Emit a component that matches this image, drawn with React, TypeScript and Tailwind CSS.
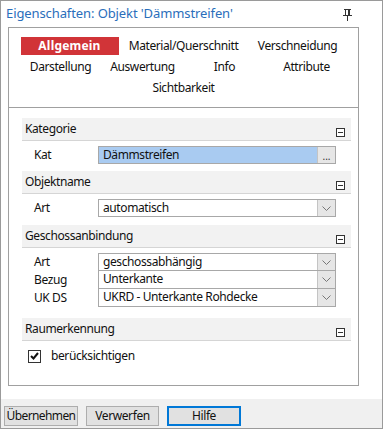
import React from "react";

// ─── Kleine Bausteine ────────────────────────────────────────────────────────

function PinIcon() {
  return (
    <svg width="9" height="12" viewBox="0 0 9 12" className="block" aria-hidden="true">
      <rect x="1" y="0" width="7" height="1" fill="#333" />
      <rect x="2" y="1" width="1" height="5" fill="#333" />
      <rect x="5" y="1" width="2" height="5" fill="#333" />
      <rect x="0" y="6" width="9" height="1" fill="#333" />
      <rect x="4" y="7" width="1" height="5" fill="#333" />
    </svg>
  );
}

function CollapseBox() {
  return (
    <div className="flex h-[9px] w-[9px] items-center justify-center border border-[#333] bg-white">
      <div className="h-px w-[5px] bg-[#333]" />
    </div>
  );
}

function Chevron() {
  return (
    <svg width="9" height="5" viewBox="0 0 9 5" aria-hidden="true">
      <path d="M0.5 0.5 4.5 4.5 8.5 0.5" fill="none" stroke="#777" strokeWidth="1" />
    </svg>
  );
}

function SectionHeader({ title }: { title: string }) {
  return (
    <div className="flex h-[23px] items-end justify-between border-b border-[#d5d5d5] bg-[#f2f2f2] pl-[3px] pr-[6px]">
      <span className="self-center text-[#111]">{title}</span>
      <div className="mb-[3px]">
        <CollapseBox />
      </div>
    </div>
  );
}

interface FieldRowProps {
  label: string;
  value: string;
  kind: "combo" | "dots";
  selected?: boolean;
  first?: boolean;
}

function FieldRow({ label, value, kind, selected, first }: FieldRowProps) {
  return (
    <div className="flex h-[18px] items-stretch">
      <div className="w-[76px] pl-[12px] leading-[17px] text-[#111]">{label}</div>
      <div
        className={[
          "flex w-[238px] border-x border-b border-[#a8a8a8]",
          first ? "border-t" : "",
        ].join(" ")}
      >
        <div
          className={[
            "flex-1 pl-[4px] leading-[16px] text-[#111]",
            selected ? "bg-[#a9cbf1]" : "bg-white",
          ].join(" ")}
        >
          {value}
        </div>
        <div
          className={[
            "flex w-[18px] justify-center border-l border-[#c4c4c4] bg-[#e6e6e6]",
            kind === "combo" ? "items-center" : "items-end pb-[2px]",
          ].join(" ")}
        >
          {kind === "combo" ? (
            <Chevron />
          ) : (
            <span className="text-[10px] leading-none tracking-normal text-[#333]">...</span>
          )}
        </div>
      </div>
    </div>
  );
}

// ─── Tabs ────────────────────────────────────────────────────────────────────

const tabRows: string[][] = [
  ["Allgemein", "Material/Querschnitt", "Verschneidung"],
  ["Darstellung", "Auswertung", "Info", "Attribute"],
  ["Sichtbarkeit"],
];

function Tabs() {
  return (
    <div className="border-b border-[#a0a0a0] pt-[7px] pb-[9px]">
      {tabRows.map((row, ri) => (
        <div key={ri} className="flex h-[21px] items-center justify-center gap-4">
          {row.map((t) => {
            const active = t === "Allgemein";
            return (
              <div
                key={t}
                className={[
                  "flex h-[18px] items-center justify-center whitespace-nowrap",
                  ri === 1 ? "w-[66px]" : "w-[98px]",
                  active ? "bg-[#d13438] font-bold tracking-[0.2px] text-white" : "text-[#111]",
                ].join(" ")}
              >
                {t}
              </div>
            );
          })}
        </div>
      ))}
    </div>
  );
}

// ─── App ─────────────────────────────────────────────────────────────────────

export default function App() {
  return (
    <div
      className="flex h-[429px] w-[383px] flex-col border border-[#9a9a9a] bg-white text-[12px] tracking-[-0.4px]"
      style={{ fontFamily: '"Noto Sans", "Open Sans", sans-serif' }}
    >
      {/* Titelzeile */}
      <div className="flex h-[26px] items-start justify-between pl-[5px] pr-[30px] pt-[3px]">
        <span className="text-[13px] tracking-[-0.1px] text-[#2a6ebb]">
          Eigenschaften: Objekt 'Dämmstreifen'
        </span>
        <div className="pt-[5px]">
          <PinIcon />
        </div>
      </div>

      {/* Eigenschaftsfenster */}
      <div className="ml-[7px] h-[359px] w-[351px] border border-[#a0a0a0]">
        <Tabs />

        <div className="pl-[13px] pr-[7px] pt-[10px]">
          <SectionHeader title="Kategorie" />
          <div className="pt-[5px] pb-[7px]">
            <FieldRow label="Kat" value="Dämmstreifen" kind="dots" selected first />
          </div>

          <SectionHeader title="Objektname" />
          <div className="pt-[5px] pb-[8px]">
            <FieldRow label="Art" value="automatisch" kind="combo" first />
          </div>

          <SectionHeader title="Geschossanbindung" />
          <div className="pt-[5px] pb-[11px]">
            <FieldRow label="Art" value="geschossabhängig" kind="combo" first />
            <FieldRow label="Bezug" value="Unterkante" kind="combo" />
            <FieldRow label="UK DS" value="UKRD - Unterkante Rohdecke" kind="combo" />
          </div>

          <SectionHeader title="Raumerkennung" />
          <div className="flex items-center gap-[10px] pl-[6px] pt-[6px]">
            <div className="flex h-[13px] w-[13px] items-center justify-center border border-[#333] bg-white">
              <svg width="9" height="8" viewBox="0 0 9 8" aria-hidden="true">
                <path d="M1 4 3.5 6.5 8 1" fill="none" stroke="#111" strokeWidth="2" />
              </svg>
            </div>
            <span className="text-[#111]">berücksichtigen</span>
          </div>
        </div>
      </div>

      {/* Schaltflächen */}
      <div className="mt-[13px] flex flex-1 items-start gap-[8px] bg-[#f0f0f0] pl-[3px] pt-[7px]">
        <button className="h-[20px] w-[74px] border border-[#adadad] bg-[#e1e1e1] leading-none tracking-[-0.6px] text-[#111]">
          Übernehmen
        </button>
        <button className="h-[20px] w-[73px] border border-[#adadad] bg-[#e1e1e1] leading-none text-[#111]">
          Verwerfen
        </button>
        <button className="h-[20px] w-[74px] border-2 border-[#0078d7] bg-[#e1e1e1] leading-none text-[#111]">
          Hilfe
        </button>
      </div>
    </div>
  );
}
